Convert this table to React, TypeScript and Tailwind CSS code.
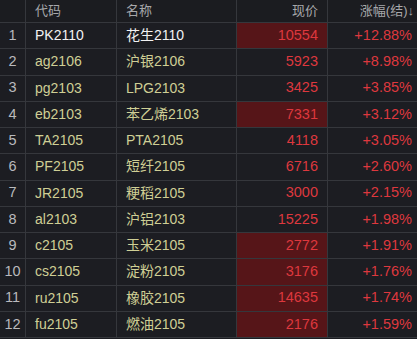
import React from "react";

const rows = [
  { c: "PK2110", n: "花生2110", p: "10554", r: "+12.88%", hl: true, sel: true },
  { c: "ag2106", n: "沪银2106", p: "5923", r: "+8.98%" },
  { c: "pg2103", n: "LPG2103", p: "3425", r: "+3.85%" },
  { c: "eb2103", n: "苯乙烯2103", p: "7331", r: "+3.12%", hl: true },
  { c: "TA2105", n: "PTA2105", p: "4118", r: "+3.05%" },
  { c: "PF2105", n: "短纤2105", p: "6716", r: "+2.60%" },
  { c: "JR2105", n: "粳稻2105", p: "3000", r: "+2.15%" },
  { c: "al2103", n: "沪铝2103", p: "15225", r: "+1.98%" },
  { c: "c2105", n: "玉米2105", p: "2772", r: "+1.91%", hl: true },
  { c: "cs2105", n: "淀粉2105", p: "3176", r: "+1.76%", hl: true },
  { c: "ru2105", n: "橡胶2105", p: "14635", r: "+1.74%", hl: true },
  { c: "fu2105", n: "燃油2105", p: "2176", r: "+1.59%", hl: true },
];

const font = { fontFamily: '"Liberation Sans", "Noto Sans CJK SC", sans-serif' };

export default function App() {
  return (
    <div className="w-[417px] h-[339px] bg-[#1c1d22] overflow-hidden text-[14px]" style={font}>
      <div className="grid grid-cols-[26px_91px_120px_91px_89px] h-[23px] border-b border-[#35373c] bg-[#1b1c20] text-[13px] text-[#a7a8ab]">
        <div className="border-r border-[#35373c]" />
        <div className="flex items-center pl-[9px] border-r border-[#35373c]">代码</div>
        <div className="flex items-center pl-[9px] border-r border-[#35373c]">名称</div>
        <div className="flex items-center justify-end pr-[9px] border-r border-[#35373c]">现价</div>
        <div className="flex items-center justify-end pr-[3px]">涨幅(结)↓</div>
      </div>
      {rows.map((row, i) => (
        <div
          key={i}
          className="grid grid-cols-[26px_91px_120px_91px_89px] h-[26.25px] border-b border-[#35373c]"
        >
          <div className="flex items-center justify-center border-r border-[#35373c] text-[#b9babd] text-[14.5px]">{i + 1}</div>
          <div
            className={
              "flex items-center pl-[9px] border-r border-[#35373c] " +
              (row.sel ? "text-[#f2f2f2]" : "text-[#cfcf95]")
            }
          >
            {row.c}
          </div>
          <div
            className={
              "flex items-center pl-[9px] border-r border-[#35373c] " +
              (row.sel ? "text-[#f2f2f2]" : "text-[#cfcf95]")
            }
          >
            {row.n}
          </div>
          <div
            className={
              "flex items-center justify-end pr-[9px] border-r border-[#35373c] text-[#de383e] text-[14.5px] " +
              (row.hl ? "bg-[#561518]" : "")
            }
          >
            {row.p}
          </div>
          <div className="flex items-center justify-end pr-[5px] text-[#de383e] text-[14.5px]">{row.r}</div>
        </div>
      ))}
    </div>
  );
}
